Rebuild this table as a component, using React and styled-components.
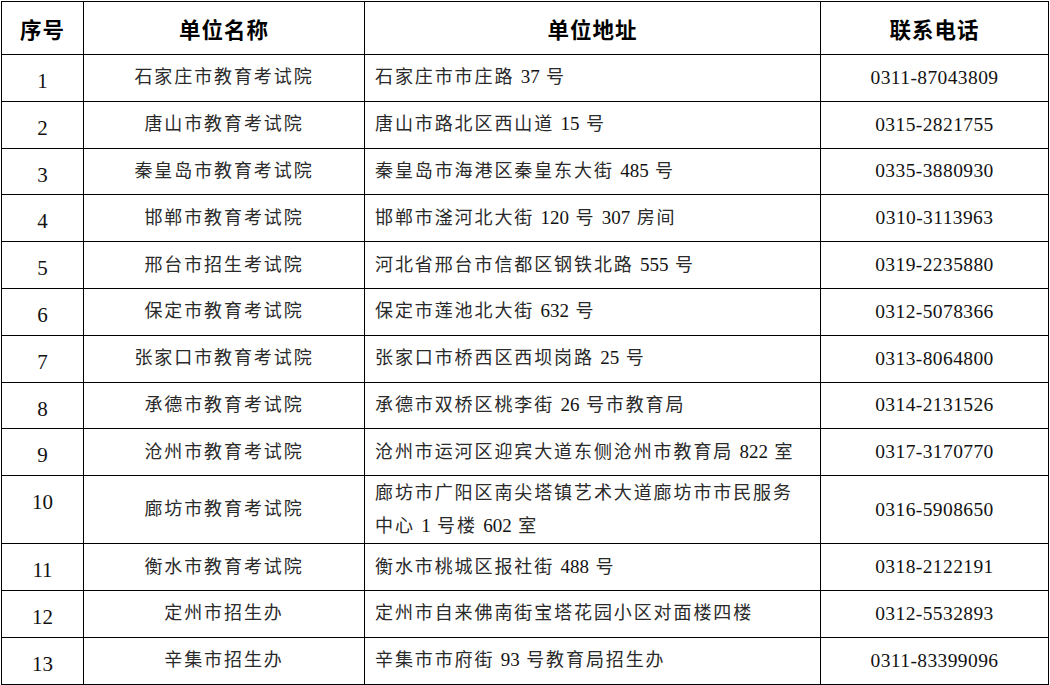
import styled, { createGlobalStyle } from "styled-components";

const GlobalStyle = createGlobalStyle`
  html, body {
    margin: 0;
    padding: 0;
    background: #fff;
  }
  body {
    font-family: "Liberation Serif", "Noto Sans CJK SC", serif;
    color: #222;
  }
`;

const Page = styled.div`
  width: 1050px;
  height: 685px;
  overflow: hidden;
  padding: 1px 0 0 1px;
  box-sizing: border-box;
`;

const Table = styled.table`
  width: 1047px;
  border-collapse: collapse;
  table-layout: fixed;
`;

const HeadCell = styled.th`
  height: 52px;
  padding: 0;
  border: 1.5px solid #000;
  font-family: "Noto Sans CJK SC", sans-serif;
  font-weight: 700;
  font-size: 21.5px;
  letter-spacing: 1px;
  color: #000;
  text-align: center;
  vertical-align: middle;
`;

const Row = styled.tr`
  height: ${(p) => (p.$tall ? "68px" : "46.8px")};
`;

const Cell = styled.td`
  padding: 0;
  border: 1.5px solid #000;
  font-family: "Liberation Serif", "Noto Sans CJK SC", serif;
  font-size: 18px;
  letter-spacing: 1.9px;
  color: #2a2a2a;
  vertical-align: middle;
  text-align: center;
  line-height: 33px;
`;

const AddrCell = styled(Cell)`
  text-align: left;
  padding: 0 14px 0 10px;
`;

const AddrLine = styled.div`
  white-space: nowrap;
`;

const NumCell = styled(Cell)`
  vertical-align: top;
  font-size: 21px;
  letter-spacing: 0;
  line-height: 26px;
  padding-top: 13px;
  color: #111;
`;

const Digits = styled.span`
  font-size: 19px;
  line-height: 1;
  letter-spacing: 0;
  color: #111;
`;

const Phone = styled.span`
  font-size: 19.5px;
  letter-spacing: 0.4px;
  color: #111;
`;

const rows = [
  ["石家庄市教育考试院", ["石家庄市市庄路 37 号"], "0311-87043809"],
  ["唐山市教育考试院", ["唐山市路北区西山道 15 号"], "0315-2821755"],
  ["秦皇岛市教育考试院", ["秦皇岛市海港区秦皇东大街 485 号"], "0335-3880930"],
  ["邯郸市教育考试院", ["邯郸市滏河北大街 120 号 307 房间"], "0310-3113963"],
  ["邢台市招生考试院", ["河北省邢台市信都区钢铁北路 555 号"], "0319-2235880"],
  ["保定市教育考试院", ["保定市莲池北大街 632 号"], "0312-5078366"],
  ["张家口市教育考试院", ["张家口市桥西区西坝岗路 25 号"], "0313-8064800"],
  ["承德市教育考试院", ["承德市双桥区桃李街 26 号市教育局"], "0314-2131526"],
  ["沧州市教育考试院", ["沧州市运河区迎宾大道东侧沧州市教育局 822 室"], "0317-3170770"],
  ["廊坊市教育考试院", ["廊坊市广阳区南尖塔镇艺术大道廊坊市市民服务", "中心 1 号楼 602 室"], "0316-5908650", true],
  ["衡水市教育考试院", ["衡水市桃城区报社街 488 号"], "0318-2122191"],
  ["定州市招生办", ["定州市自来佛南街宝塔花园小区对面楼四楼"], "0312-5532893"],
  ["辛集市招生办", ["辛集市市府街 93 号教育局招生办"], "0311-83399096"],
];

// keep numbers in addresses tight like the source document
const renderAddr = (text) =>
  text.split(/(\d+)/).map((part, i) =>
    /^\d+$/.test(part) ? <Digits key={i}>{part}</Digits> : part
  );

export default function App() {
  return (
    <Page>
      <GlobalStyle />
      <Table>
        <colgroup>
          <col style={{ width: 82 }} />
          <col style={{ width: 281 }} />
          <col style={{ width: 456 }} />
          <col style={{ width: 228 }} />
        </colgroup>
        <thead>
          <tr>
            <HeadCell>序号</HeadCell>
            <HeadCell>单位名称</HeadCell>
            <HeadCell>单位地址</HeadCell>
            <HeadCell>联系电话</HeadCell>
          </tr>
        </thead>
        <tbody>
          {rows.map(([name, lines, phone, tall], i) => (
            <Row key={i} $tall={tall}>
              <NumCell>{i + 1}</NumCell>
              <Cell>{name}</Cell>
              <AddrCell>
                {lines.map((l, j) => (
                  <AddrLine key={j}>{renderAddr(l)}</AddrLine>
                ))}
              </AddrCell>
              <Cell>
                <Phone>{phone}</Phone>
              </Cell>
            </Row>
          ))}
        </tbody>
      </Table>
    </Page>
  );
}
